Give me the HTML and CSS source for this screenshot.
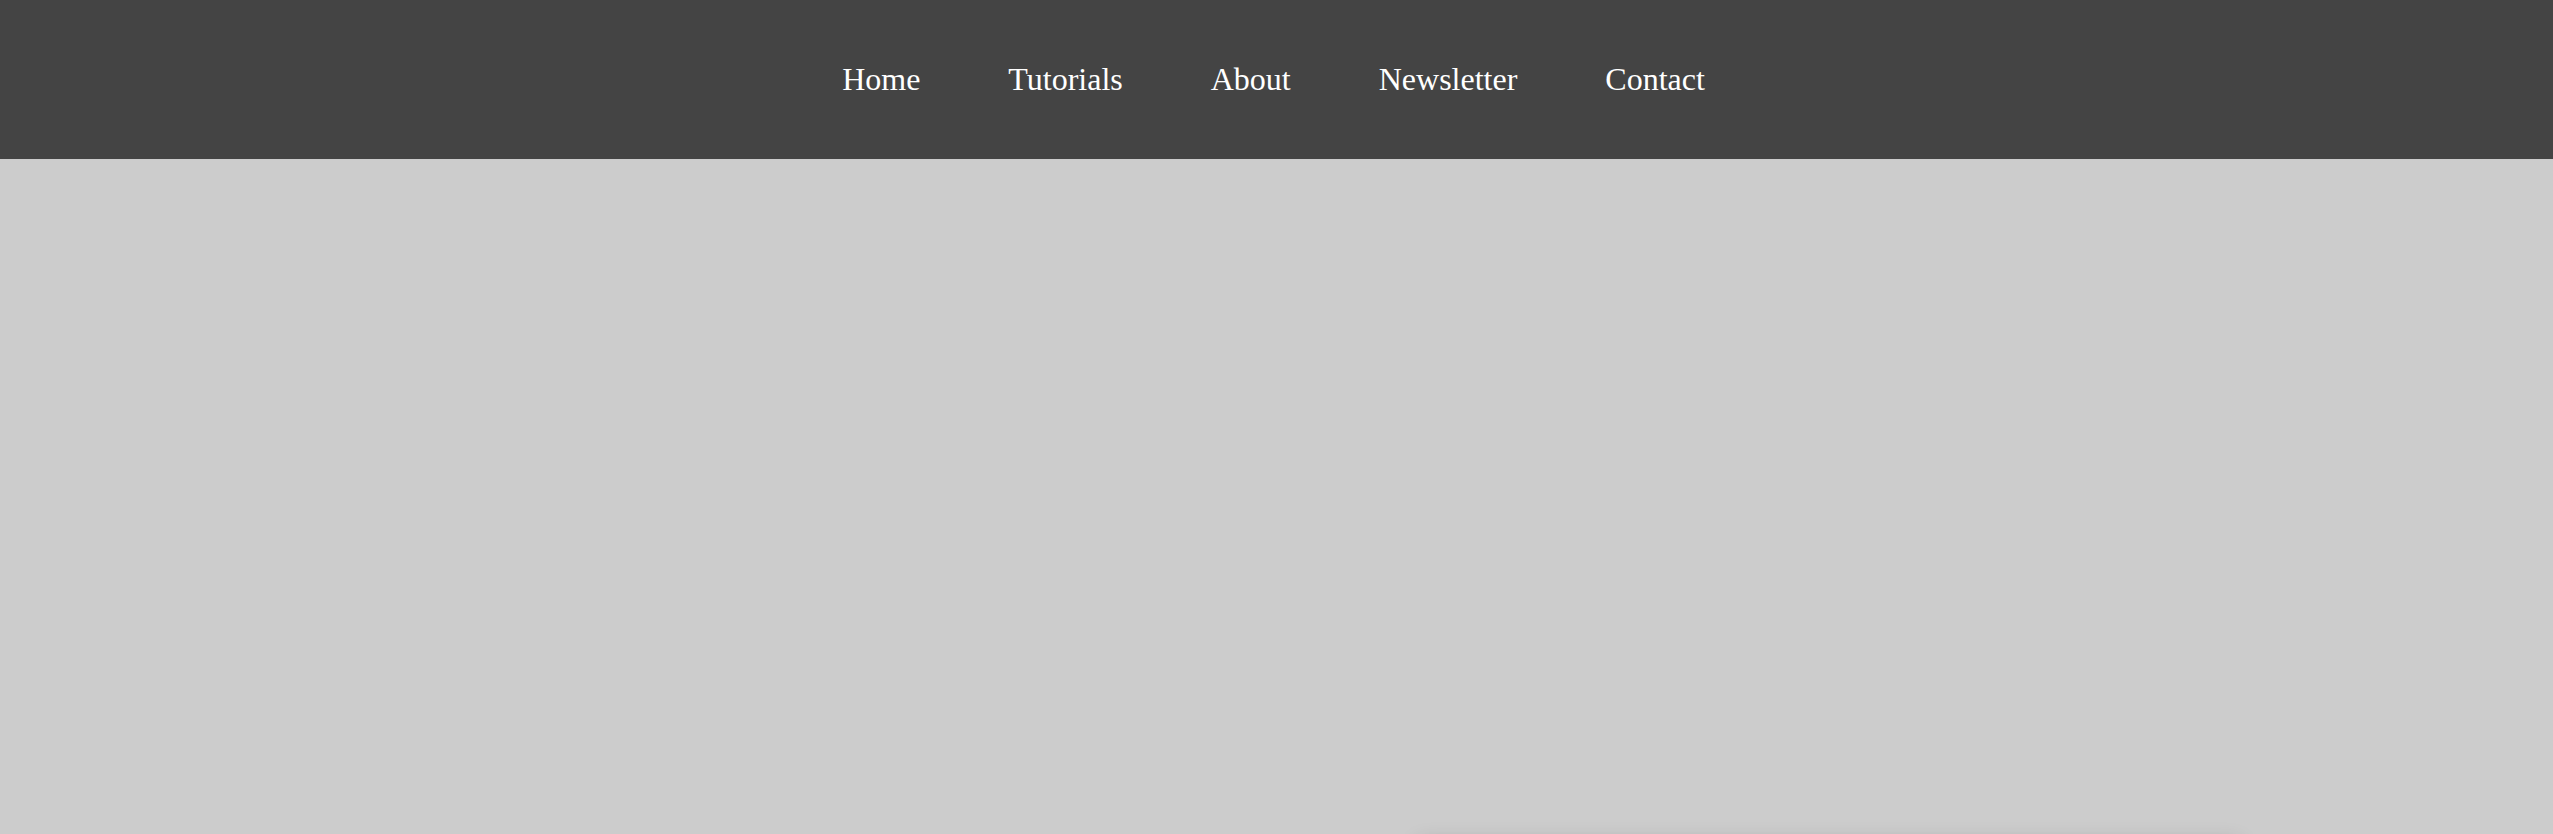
FILE: index.html
```html
<!DOCTYPE html>
<html lang="en">
<head>
<meta charset="utf-8">
<title>Nav</title>
<link rel="stylesheet" href="styles.css">
</head>
<body>
<header class="site-header">
  <nav class="main-nav">
    <a class="nav-link" href="#">Home</a>
    <a class="nav-link" href="#">Tutorials</a>
    <a class="nav-link" href="#">About</a>
    <a class="nav-link" href="#">Newsletter</a>
    <a class="nav-link" href="#">Contact</a>
  </nav>
</header>
<main class="content">
  <section class="card"></section>
</main>
</body>
</html>
```
FILE: styles.css
```css
html, body {
  margin: 0;
  padding: 0;
}
body {
  background: #cccccc;
  font-family: "Liberation Serif", "Times New Roman", serif;
  overflow: hidden;
  height: 834px;
}
.site-header {
  background: #444444;
  height: 159px;
  display: flex;
  align-items: center;
  justify-content: center;
}
.main-nav {
  display: flex;
  gap: 88px;
  padding-right: 6px;
  padding-bottom: 2px;
}
.nav-link {
  color: #ffffff;
  text-decoration: none;
  font-size: 32px;
  line-height: 1;
}
.content {
  display: flex;
  padding-top: 684px;
  padding-left: 1418px;
}
.card {
  width: 822px;
  height: 120px;
  background: #cccccc;
  box-shadow: 0 0 20px rgba(0, 0, 0, 0.2);
}
```
